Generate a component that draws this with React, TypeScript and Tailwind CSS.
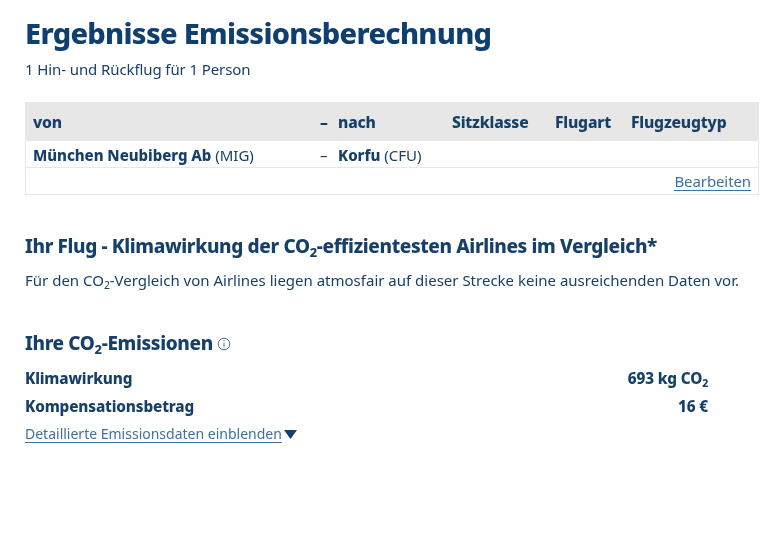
export default function App() {
  const sub = "text-[0.68em] relative top-[0.28em] leading-none font-extrabold";
  return (
    <div className="w-[781px] h-[545px] bg-white overflow-hidden pl-[25px] pr-[22px] pt-[15px] text-[#174069] blur-[0.35px] [font-family:'Noto_Sans','Open_Sans',sans-serif]">
      <h1 className="text-[29px] leading-[36px] font-extrabold text-[#0f3f70] tracking-[-0.7px]">Ergebnisse Emissionsberechnung</h1>
      <p className="mt-[8px] text-[15px] leading-[20px] tracking-[-0.1px]">1 Hin- und Rückflug für 1 Person</p>

      <div className="mt-[23px] border-x border-b border-[#e8e8e8]">
        <div className="grid grid-cols-[287px_18px_114px_103px_76px_1fr] bg-[#e7e7e7] h-[39px] items-center pl-[7px] pt-[2px] text-[15.7px] font-extrabold tracking-[-0.2px]">
          <span>von</span>
          <span>–</span>
          <span>nach</span>
          <span>Sitzklasse</span>
          <span>Flugart</span>
          <span>Flugzeugtyp</span>
        </div>
        <div className="grid grid-cols-[287px_18px_1fr] h-[27px] items-center pl-[7px] pt-[2px] text-[15px] border-b border-[#e8e8e8]">
          <span><b className="font-extrabold tracking-[-0.05px]">München Neubiberg Ab</b> (MIG)</span>
          <span>–</span>
          <span><b className="font-extrabold">Korfu</b> (CFU)</span>
        </div>
        <div className="h-[26px] flex items-center justify-end pr-[7px] pt-[1px]">
          <a className="text-[15px] leading-[17px] text-[#41709f] border-b border-[#41709f] tracking-[-0.1px]">Bearbeiten</a>
        </div>
      </div>

      <h2 className="mt-[38px] text-[19px] leading-[26px] font-extrabold tracking-[-0.36px]">
        Ihr Flug - Klimawirkung der CO<sub className={sub}>2</sub>-effizientesten Airlines im Vergleich*
      </h2>
      <p className="mt-[11px] text-[15px] leading-[20px]">
        Für den CO<sub className={sub + " !font-normal"}>2</sub>-Vergleich von Airlines liegen atmosfair auf dieser Strecke keine ausreichenden Daten vor.
      </p>

      <h2 className="mt-[40px] flex items-center text-[19px] leading-[26px] font-extrabold tracking-[-0.36px]">
        <span>Ihre CO<sub className={sub}>2</sub>-Emissionen</span>
        <svg className="ml-[4px] mt-[1px]" width="14" height="14" viewBox="0 0 14 14" fill="none" stroke="#41709f">
          <circle cx="7" cy="7" r="5.8" />
          <path d="M7 6v4.2M7 3.4v1.3" />
        </svg>
      </h2>

      <div className="mt-[8px] w-[683px] text-[15.3px] font-extrabold tracking-[-0.15px]">
        <div className="flex justify-between h-[29px] items-center">
          <span>Klimawirkung</span>
          <span>693 kg CO<sub className={sub}>2</sub></span>
        </div>
        <div className="flex justify-between h-[26px] items-center">
          <span>Kompensationsbetrag</span>
          <span>16 €</span>
        </div>
      </div>

      <div className="mt-[7px] flex items-center">
        <a className="text-[14px] leading-[16px] text-[#41709f] border-b border-[#41709f]">Detaillierte Emissionsdaten einblenden</a>
        <svg className="ml-[2px]" width="13" height="9" viewBox="0 0 13 9"><path d="M0 0h13L6.5 9z" fill="#174069" /></svg>
      </div>
    </div>
  );
}
